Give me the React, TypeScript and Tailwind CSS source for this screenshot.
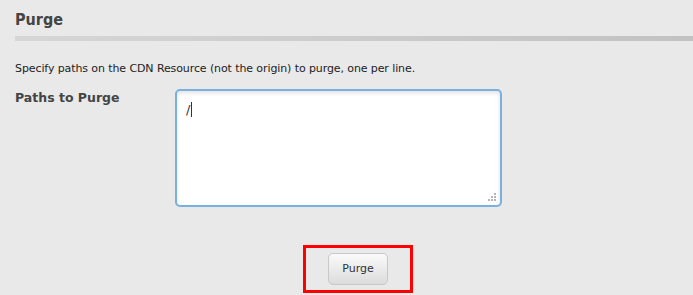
export default function App() {
    return (
        <div
            className="w-[693px] h-[295px] overflow-hidden bg-[#e9e9e9] text-[#222]"
            style={{ fontFamily: '"DejaVu Sans", Verdana, sans-serif' }}
        >
            <div className="pl-[15px] pt-[10px]">
                <h1
                    className="text-[16px] font-bold text-[#444] leading-[20px]"
                    style={{ fontFamily: '"DejaVu Sans Condensed", "DejaVu Sans", sans-serif' }}
                >
                    Purge
                </h1>
                <div className="mt-[6px] h-[5px] bg-gradient-to-r from-[#d6d6d6] to-[#c2c2c2]" />
            </div>

            <p className="pl-[15px] mt-[21px] text-[11px] leading-[14px] tracking-[-0.1px]">
                Specify paths on the CDN Resource (not the origin) to purge, one per line.
            </p>

            <div className="flex mt-[13px] pl-[15px]">
                <label className="w-[160px] pt-[1px] text-[12.5px] font-bold text-[#444] leading-[16px]">
                    Paths to Purge
                </label>
                <div className="w-[327px] h-[118px] rounded-[5px] border-2 border-[#79b0de] bg-white px-[9px] py-[6px] relative shadow-[inset_0_2px_4px_rgba(0,0,0,0.12)]">
                    <span className="text-[13px] text-[#333]">/</span>
                    <span className="inline-block w-px h-[15px] bg-[#333] align-middle ml-px" />
                    <svg className="absolute right-[3px] bottom-[3px]" width="10" height="10" viewBox="0 0 10 10">
                        <rect x="7" y="1" width="2" height="2" fill="#b5b5b5" />
                        <rect x="4" y="4" width="2" height="2" fill="#b5b5b5" />
                        <rect x="7" y="4" width="2" height="2" fill="#b5b5b5" />
                        <rect x="1" y="7" width="2" height="2" fill="#b5b5b5" />
                        <rect x="4" y="7" width="2" height="2" fill="#b5b5b5" />
                        <rect x="7" y="7" width="2" height="2" fill="#b5b5b5" />
                    </svg>
                </div>
            </div>

            <div className="flex justify-center mt-[38px] pl-[23px]">
                <div className="w-[110px] h-[48px] border-[3px] border-[#f00] flex items-center justify-center">
                    <button className="w-[60px] h-[32px] rounded-[5px] border border-[#c8c8c8] bg-gradient-to-b from-[#fafafa] to-[#dcdcdc] text-[11px] text-[#333]">
                        Purge
                    </button>
                </div>
            </div>
        </div>
    );
}
